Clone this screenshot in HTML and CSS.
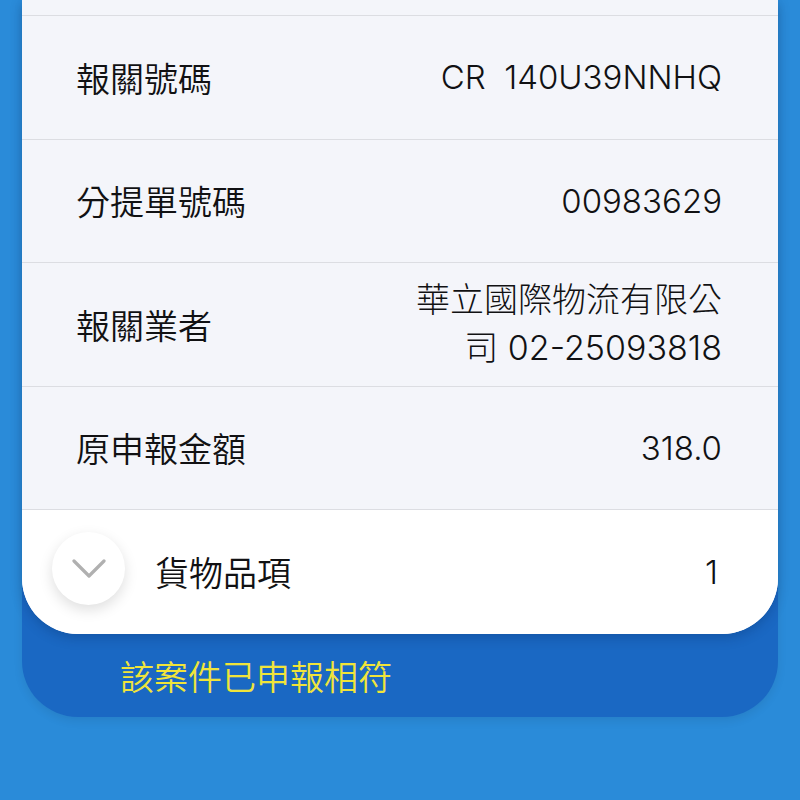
FILE: index.html
```html
<!DOCTYPE html>
<html lang="zh-Hant">
<head>
<meta charset="utf-8">
<title>報關資料</title>
<link rel="stylesheet" href="styles.css">
</head>
<body>
<div class="panel">
  <div class="card">
    <div class="row row-top"></div>
    <div class="row">
      <span class="label">報關號碼</span>
      <span class="value">CR&nbsp; 140U39NNHQ</span>
    </div>
    <div class="row">
      <span class="label">分提單號碼</span>
      <span class="value">00983629</span>
    </div>
    <div class="row">
      <span class="label">報關業者</span>
      <span class="value value-wrap">華立國際物流有限公司 02-25093818</span>
    </div>
    <div class="row">
      <span class="label">原申報金額</span>
      <span class="value">318.0</span>
    </div>
    <div class="row row-items">
      <span class="toggle">
        <svg width="34" height="20" viewBox="0 0 34 20"><path d="M2 2 L17 17 L32 2" fill="none" stroke="#b0b0b0" stroke-width="3.2" stroke-linecap="round" stroke-linejoin="round"/></svg>
      </span>
      <span class="label">貨物品項</span>
      <span class="value">1</span>
    </div>
  </div>
  <div class="status">該案件已申報相符</div>
</div>
</body>
</html>
```

FILE: styles.css
```css
html, body {
  margin: 0;
  padding: 0;
}
body {
  background: #2a8bd9;
  height: 800px;
  overflow: hidden;
  font-family: "Inter", "Noto Sans CJK TC", sans-serif;
}
.panel {
  margin: 0 22px;
  background: #1a68c3;
  border-radius: 0 0 56px 56px;
  box-shadow: 0 4px 10px rgba(0, 0, 0, 0.08);
}
.card {
  background: #f4f5fa;
  border-radius: 0 0 56px 56px;
  overflow: hidden;
  box-shadow: 0 4px 12px rgba(0, 30, 80, 0.25);
  position: relative;
}
.row {
  box-sizing: border-box;
  height: 123.5px;
  border-bottom: 1px solid #dcdde2;
  display: flex;
  align-items: center;
  justify-content: space-between;
  padding: 0 56px 0 54px;
  color: #111113;
  font-size: 34px;
}
.row-top {
  height: 16px;
}
.label {
  font-family: "Noto Sans CJK TC", sans-serif;
  font-weight: 350;
  white-space: nowrap;
}
.value {
  text-align: right;
  font-weight: 300;
  font-size: 33px;
}
.value-wrap {
  max-width: 312px;
  line-height: 48px;
  font-size: 34px;
}
.row-items {
  background: #ffffff;
  border-bottom: none;
  justify-content: flex-start;
  padding-left: 30px;
  padding-right: 60px;
}
.row-items .value {
  margin-left: auto;
}
.toggle {
  width: 73px;
  height: 73px;
  border-radius: 50%;
  background: #ffffff;
  box-shadow: 0 5px 14px rgba(0, 0, 0, 0.13);
  display: flex;
  align-items: center;
  justify-content: center;
  margin-right: 30px;
  margin-top: -6px;
}
.toggle svg {
  margin-top: 1px;
}
.status {
  height: 83px;
  display: flex;
  align-items: center;
  padding-left: 98px;
  color: #f0e43a;
  font-family: "Noto Sans CJK TC", sans-serif;
  font-weight: 350;
  font-size: 34px;
}
```
